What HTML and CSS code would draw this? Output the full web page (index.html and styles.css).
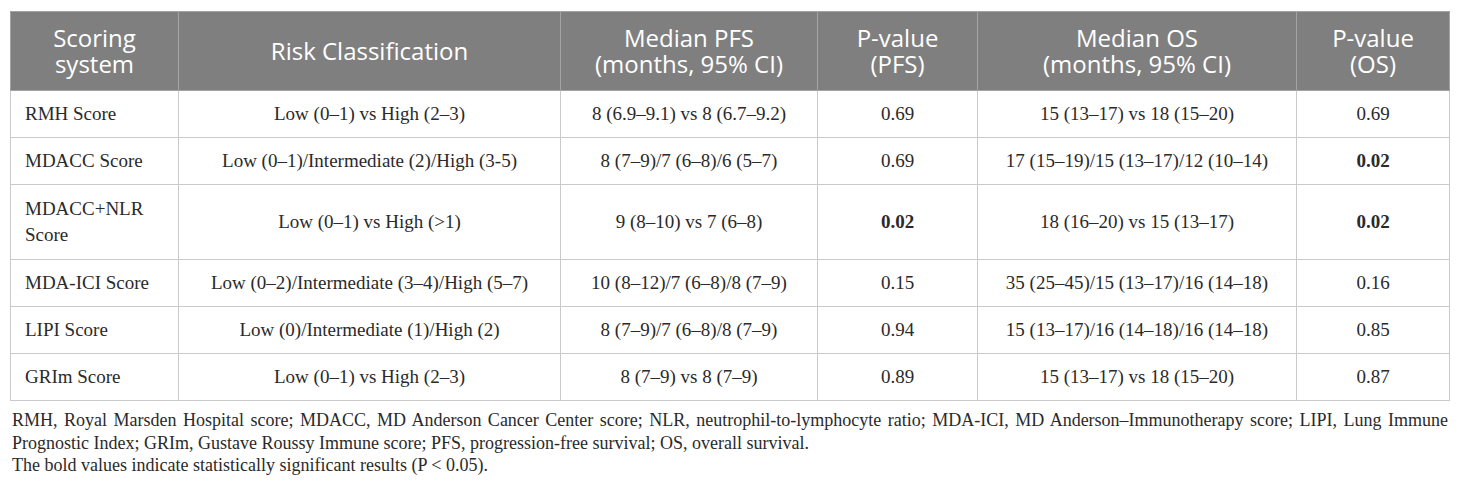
FILE: index.html
```html
<!DOCTYPE html>
<html>
<head>
<meta charset="utf-8">
<link rel="stylesheet" href="styles.css">
</head>
<body>
<div class="wrap">
<table class="data">
<colgroup>
<col class="c1"><col class="c2"><col class="c3"><col class="c4"><col class="c5"><col class="c6">
</colgroup>
<thead>
<tr class="head">
<th>Scoring<br>system</th>
<th>Risk Classification</th>
<th>Median PFS<br>(months, 95% CI)</th>
<th>P-value<br>(PFS)</th>
<th>Median OS<br>(months, 95% CI)</th>
<th>P-value<br>(OS)</th>
</tr>
</thead>
<tbody>
<tr class="r"><td>RMH Score</td><td>Low (0–1) vs High (2–3)</td><td>8 (6.9–9.1) vs 8 (6.7–9.2)</td><td>0.69</td><td>15 (13–17) vs 18 (15–20)</td><td>0.69</td></tr>
<tr class="r"><td>MDACC Score</td><td>Low (0–1)/Intermediate (2)/High (3-5)</td><td>8 (7–9)/7 (6–8)/6 (5–7)</td><td>0.69</td><td>17 (15–19)/15 (13–17)/12 (10–14)</td><td><b>0.02</b></td></tr>
<tr class="r tall"><td>MDACC+NLR<br>Score</td><td>Low (0–1) vs High (&gt;1)</td><td>9 (8–10) vs 7 (6–8)</td><td><b>0.02</b></td><td>18 (16–20) vs 15 (13–17)</td><td><b>0.02</b></td></tr>
<tr class="r"><td>MDA-ICI Score</td><td>Low (0–2)/Intermediate (3–4)/High (5–7)</td><td>10 (8–12)/7 (6–8)/8 (7–9)</td><td>0.15</td><td>35 (25–45)/15 (13–17)/16 (14–18)</td><td>0.16</td></tr>
<tr class="r"><td>LIPI Score</td><td>Low (0)/Intermediate (1)/High (2)</td><td>8 (7–9)/7 (6–8)/8 (7–9)</td><td>0.94</td><td>15 (13–17)/16 (14–18)/16 (14–18)</td><td>0.85</td></tr>
<tr class="r"><td>GRIm Score</td><td>Low (0–1) vs High (2–3)</td><td>8 (7–9) vs 8 (7–9)</td><td>0.89</td><td>15 (13–17) vs 18 (15–20)</td><td>0.87</td></tr>
</tbody>
</table>
<div class="notes">
<p class="abbr">RMH, Royal Marsden Hospital score; MDACC, MD Anderson Cancer Center score; NLR, neutrophil-to-lymphocyte ratio; MDA-ICI, MD Anderson–Immunotherapy score; LIPI, Lung Immune Prognostic Index; GRIm, Gustave Roussy Immune score; PFS, progression-free survival; OS, overall survival.</p>
<p>The bold values indicate statistically significant results (P &lt; 0.05).</p>
</div>
</div>
</body>
</html>
```

FILE: styles.css
```css
html, body {
  margin: 0;
  padding: 0;
  background: #ffffff;
}
.wrap {
  padding: 11px 11px 0 10px;
}
.data {
  width: 1439px;
  table-layout: fixed;
  border-collapse: collapse;
  font-family: "Liberation Serif", "Times New Roman", serif;
  font-size: 19px;
  color: #2a2a2a;
}
.c1 { width: 168px; }
.c2 { width: 382px; }
.c3 { width: 257px; }
.c4 { width: 160px; }
.c5 { width: 319px; }
.c6 { width: 153px; }
.data th {
  background: #7f7f7f;
  color: #ffffff;
  font-family: "Open Sans", "Noto Sans", sans-serif;
  font-weight: 400;
  font-size: 24px;
  line-height: 26px;
  height: 79px;
  padding: 0 4px;
  text-align: center;
  vertical-align: middle;
  border: 1px solid #a3a3a3;
  box-sizing: border-box;
}
.data td {
  border: 1px solid #cacaca;
  text-align: center;
  vertical-align: middle;
  padding: 0 8px;
  height: 47px;
  line-height: 26px;
  box-sizing: border-box;
}
.data td:first-child {
  text-align: left;
  padding-left: 14px;
}
.data tr.tall td {
  height: 75px;
}
.data b {
  font-weight: 700;
}
.notes {
  margin-top: 8px;
  width: 1438px;
  font-family: "Liberation Serif", "Times New Roman", serif;
  font-size: 18px;
  line-height: 22.5px;
  color: #2a2a2a;
}
.notes p {
  margin: 0;
  padding-left: 2px;
}
.notes .abbr {
  text-align: justify;
}
```
